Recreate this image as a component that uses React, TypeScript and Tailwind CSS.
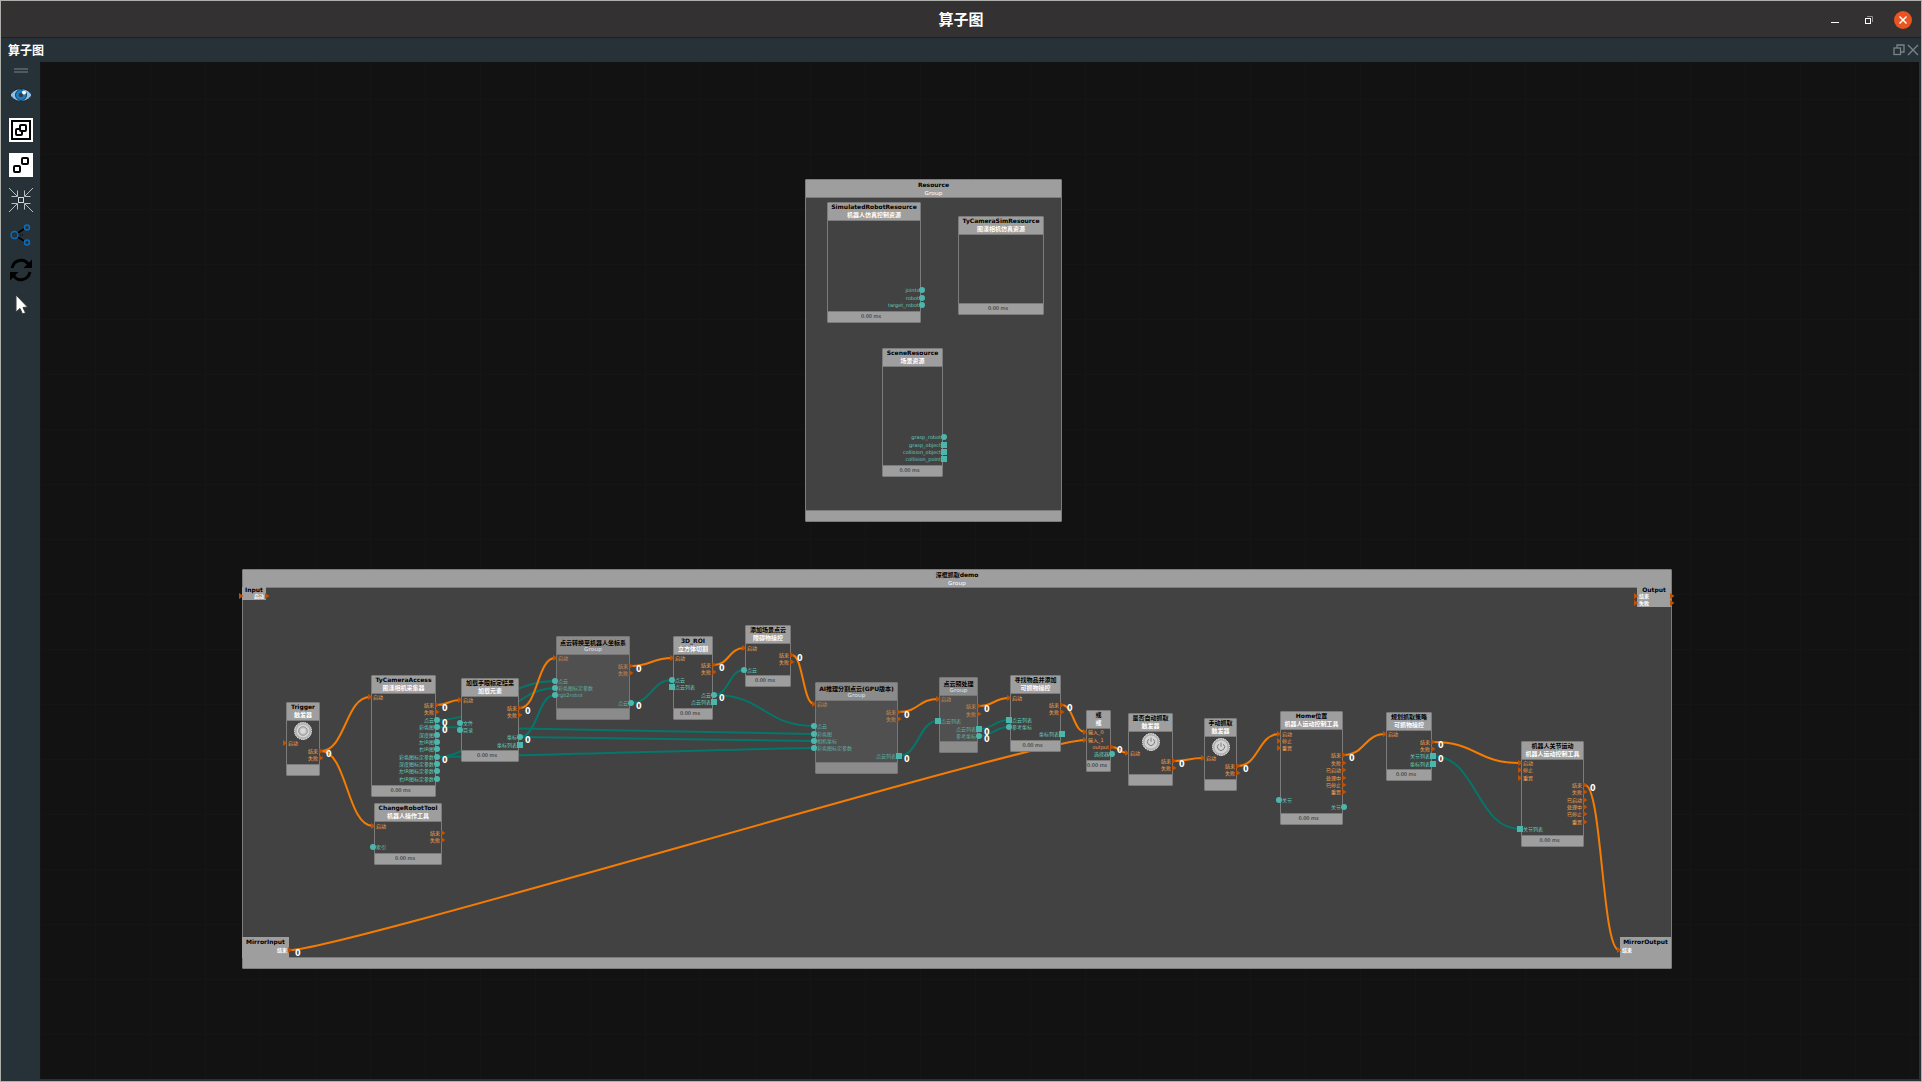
import type { ReactNode } from "react";
import clsx from "clsx";

type PortKind = "flow" | "value" | "list";
type NodeKind = "node" | "group" | "io" | "mirror";

interface PortData {
  kind: PortKind;
  y: number;
  label: string;
}

interface NodeData {
  id: string;
  title: string;
  subtitle?: string;
  kind?: NodeKind;
  x: number;
  y: number;
  w: number;
  h: number;
  time?: boolean;
  icon?: "ring" | "power";
  inputs?: PortData[];
  outputs?: PortData[];
}

interface EdgeData {
  from: [string, number];
  to: [string, number];
}

const flow = (y: number, label: string): PortData => ({ kind: "flow", y, label });
const value = (y: number, label: string): PortData => ({ kind: "value", y, label });
const list = (y: number, label: string): PortData => ({ kind: "list", y, label });

// scene position of the view's top left corner
const VIEW = { x: 40, y: 62 };

const groups: NodeData[] = [
  { id: "resource", title: "Resource", subtitle: "Group", x: 805, y: 179, w: 257, h: 343 },
  { id: "demo", title: "深框抓取demo", subtitle: "Group", x: 242, y: 569, w: 1430, h: 400 },
];

const nodes: NodeData[] = [
  {
    id: "simRobot", title: "SimulatedRobotResource", subtitle: "机器人仿真控制资源",
    x: 827, y: 202, w: 94, h: 121, time: true,
    outputs: [value(290, "joints"), value(298, "robot"), value(305, "target_robot")],
  },
  {
    id: "simCamera", title: "TyCameraSimResource", subtitle: "图漾相机仿真资源",
    x: 958, y: 216, w: 86, h: 99, time: true,
  },
  {
    id: "scene", title: "SceneResource", subtitle: "场景资源",
    x: 882, y: 348, w: 61, h: 129, time: true,
    outputs: [
      value(437, "grasp_robot"), list(445, "grasp_object"),
      list(452, "collision_object"), list(459, "collision_point"),
    ],
  },
  {
    id: "input", title: "Input", kind: "io", x: 242, y: 587, w: 24, h: 13,
    inputs: [flow(596, "")], outputs: [flow(596, "启动")],
  },
  {
    id: "output", title: "Output", kind: "io", x: 1637, y: 587, w: 34, h: 20,
    inputs: [flow(596, "结束"), flow(603, "失败")], outputs: [flow(596, ""), flow(603, "")],
  },
  {
    id: "mirrorInput", title: "MirrorInput", kind: "mirror", x: 242, y: 937, w: 47, h: 21,
    outputs: [flow(950, "结束")],
  },
  {
    id: "mirrorOutput", title: "MirrorOutput", kind: "mirror", x: 1620, y: 937, w: 51, h: 21,
    inputs: [flow(950, "结束")],
  },
  {
    id: "trigger", title: "Trigger", subtitle: "触发器", icon: "ring",
    x: 286, y: 702, w: 34, h: 74,
    inputs: [flow(743, "启动")], outputs: [flow(751, "结束"), flow(758, "失败")],
  },
  {
    id: "camera", title: "TyCameraAccess", subtitle: "图漾相机采集器",
    x: 371, y: 675, w: 65, h: 122, time: true,
    inputs: [flow(697, "启动")],
    outputs: [
      flow(705, "结束"), flow(712, "失败"), value(720, "点云"), value(727, "彩色图"),
      value(735, "深度图"), value(742, "左IR图"), value(749, "右IR图"),
      value(757, "彩色图标定参数"), value(764, "深度图标定参数"),
      value(771, "左IR图标定参数"), value(779, "右IR图标定参数"),
    ],
  },
  {
    id: "robotTool", title: "ChangeRobotTool", subtitle: "机器人操作工具",
    x: 374, y: 803, w: 68, h: 62, time: true,
    inputs: [flow(826, "启动"), value(847, "索引")],
    outputs: [flow(833, "结束"), flow(840, "失败")],
  },
  {
    id: "calib", title: "加载手眼标定结果", subtitle: "加载元素",
    x: 461, y: 678, w: 58, h: 84, time: true,
    inputs: [flow(700, "启动"), value(723, "文件"), value(730, "目录")],
    outputs: [flow(708, "结束"), flow(715, "失败"), value(737, "坐标"), list(745, "坐标列表")],
  },
  {
    id: "convert", title: "点云转换至机器人坐标系", subtitle: "Group", kind: "group",
    x: 556, y: 636, w: 74, h: 84,
    inputs: [flow(658, "启动"), value(681, "点云"), value(688, "彩色图标定参数"), value(695, "rgb2robot")],
    outputs: [flow(666, "结束"), flow(673, "失败"), value(703, "点云")],
  },
  {
    id: "roi", title: "3D_ROI", subtitle: "立方体切割",
    x: 673, y: 636, w: 40, h: 84, time: true,
    inputs: [flow(658, "启动"), value(680, "点云"), list(687, "点云列表")],
    outputs: [flow(665, "结束"), flow(672, "失败"), value(695, "点云"), list(702, "点云列表")],
  },
  {
    id: "addCloud", title: "添加场景点云", subtitle: "障碍物操控",
    x: 745, y: 625, w: 46, h: 62, time: true,
    inputs: [flow(648, "启动"), value(670, "点云")],
    outputs: [flow(655, "结束"), flow(662, "失败")],
  },
  {
    id: "ai", title: "AI推理分割点云(GPU版本)", subtitle: "Group", kind: "group",
    x: 815, y: 682, w: 83, h: 92,
    inputs: [
      flow(704, "启动"), value(726, "点云"), value(734, "彩色图"),
      value(741, "相机坐标"), value(748, "彩色图标定参数"),
    ],
    outputs: [flow(712, "结束"), flow(719, "失败"), list(756, "点云列表")],
  },
  {
    id: "pre", title: "点云预处理", subtitle: "Group", kind: "group",
    x: 939, y: 677, w: 39, h: 76,
    inputs: [flow(699, "启动"), list(721, "点云列表")],
    outputs: [flow(706, "结束"), flow(714, "失败"), list(729, "点云列表"), value(736, "参考坐标")],
  },
  {
    id: "find", title: "寻找物品并添加", subtitle: "可抓物操控",
    x: 1010, y: 675, w: 51, h: 77, time: true,
    inputs: [flow(698, "启动"), list(720, "点云列表"), value(727, "参考坐标")],
    outputs: [flow(705, "结束"), flow(712, "失败"), list(734, "坐标列表")],
  },
  {
    id: "or", title: "或", subtitle: "或",
    x: 1086, y: 710, w: 25, h: 62, time: true,
    inputs: [flow(732, "输入_0"), flow(740, "输入_1")],
    outputs: [flow(747, "output"), value(754, "选择器")],
  },
  {
    id: "auto", title: "是否自动抓取", subtitle: "触发器", icon: "power",
    x: 1128, y: 713, w: 45, h: 73,
    inputs: [flow(753, "启动")], outputs: [flow(761, "结束"), flow(768, "失败")],
  },
  {
    id: "manual", title: "手动抓取", subtitle: "触发器", icon: "power",
    x: 1204, y: 718, w: 33, h: 73,
    inputs: [flow(758, "启动")], outputs: [flow(766, "结束"), flow(773, "失败")],
  },
  {
    id: "home", title: "Home位置", subtitle: "机器人运动控制工具",
    x: 1280, y: 711, w: 63, h: 114, time: true,
    inputs: [flow(734, "启动"), flow(741, "停止"), flow(748, "重置"), value(800, "关节")],
    outputs: [
      flow(755, "结束"), flow(763, "失败"), flow(770, "已启动"), flow(778, "处理中"),
      flow(785, "已停止"), flow(792, "重置"), value(807, "关节"),
    ],
  },
  {
    id: "plan", title: "规划抓取策略", subtitle: "可抓物操控",
    x: 1386, y: 712, w: 46, h: 69, time: true,
    inputs: [flow(734, "启动")],
    outputs: [flow(742, "结束"), flow(749, "失败"), list(756, "关节列表"), list(764, "坐标列表")],
  },
  {
    id: "joint", title: "机器人关节运动", subtitle: "机器人运动控制工具",
    x: 1521, y: 741, w: 63, h: 106, time: true,
    inputs: [flow(763, "启动"), flow(770, "停止"), flow(778, "重置"), list(829, "关节列表")],
    outputs: [
      flow(785, "结束"), flow(792, "失败"), flow(800, "已启动"), flow(807, "处理中"),
      flow(814, "已停止"), flow(822, "重置"),
    ],
  },
];

// [node id, port index] on both ends
const edges: EdgeData[] = [
  { from: ["camera", 2], to: ["convert", 1] },
  { from: ["camera", 3], to: ["ai", 2] },
  { from: ["camera", 7], to: ["convert", 2] },
  { from: ["camera", 7], to: ["ai", 4] },
  { from: ["calib", 2], to: ["convert", 3] },
  { from: ["calib", 2], to: ["ai", 3] },
  { from: ["convert", 2], to: ["roi", 1] },
  { from: ["roi", 2], to: ["addCloud", 1] },
  { from: ["roi", 2], to: ["ai", 1] },
  { from: ["ai", 2], to: ["pre", 1] },
  { from: ["pre", 2], to: ["find", 1] },
  { from: ["pre", 3], to: ["find", 2] },
  { from: ["plan", 2], to: ["joint", 3] },
  { from: ["trigger", 0], to: ["camera", 0] },
  { from: ["trigger", 0], to: ["robotTool", 0] },
  { from: ["camera", 0], to: ["calib", 0] },
  { from: ["calib", 0], to: ["convert", 0] },
  { from: ["convert", 0], to: ["roi", 0] },
  { from: ["roi", 0], to: ["addCloud", 0] },
  { from: ["addCloud", 0], to: ["ai", 0] },
  { from: ["ai", 0], to: ["pre", 0] },
  { from: ["pre", 0], to: ["find", 0] },
  { from: ["find", 0], to: ["or", 0] },
  { from: ["mirrorInput", 0], to: ["or", 1] },
  { from: ["or", 0], to: ["auto", 0] },
  { from: ["auto", 0], to: ["manual", 0] },
  { from: ["manual", 0], to: ["home", 0] },
  { from: ["home", 0], to: ["plan", 0] },
  { from: ["plan", 0], to: ["joint", 0] },
  { from: ["joint", 0], to: ["mirrorOutput", 0] },
];

const byId = new Map(nodes.map((node) => [node.id, node]));

const outputPoint = ([id, index]: [string, number]) => {
  const node = byId.get(id)!;
  const port = node.outputs![index];
  return { x: node.x + node.w + 1, y: port.y, kind: port.kind };
};

const inputPoint = ([id, index]: [string, number]) => {
  const node = byId.get(id)!;
  return { x: node.x - 1, y: node.inputs![index].y };
};

const edgePath = (edge: EdgeData) => {
  const a = outputPoint(edge.from);
  const b = inputPoint(edge.to);
  const bend = Math.min((b.x - a.x) / 2, 50);
  return `M${a.x} ${a.y} C${a.x + bend} ${a.y} ${b.x - bend} ${b.y} ${b.x} ${b.y}`;
};

const connected = [...new Set(edges.map((edge) => edge.from.join(":")))].map((key) => {
  const [id, index] = key.split(":");
  return { key, ...outputPoint([id, Number(index)]) };
});

const Marker = ({ kind }: { kind: PortKind }) => {
  if (kind === "flow") {
    return (
      <svg viewBox="0 0 6 6" className="size-[6px] shrink-0 fill-[#bf5202]">
        <path d="M1 0 L5.5 3 L1 6 Z" />
      </svg>
    );
  }
  return (
    <span className={clsx("size-[6px] shrink-0 bg-[#4db6ac]", kind === "value" && "rounded-full")} />
  );
};

const Port = ({ port, node, side }: { port: PortData; node: NodeData; side: "left" | "right" }) => {
  const solid = node.kind === "io" || node.kind === "mirror";
  return (
    <div
      className={clsx(
        "absolute flex h-[6px] items-center whitespace-nowrap text-[5px] leading-[6px]",
        side === "left" ? "-left-[5px]" : "-right-[5px] flex-row-reverse",
        solid ? "font-bold text-white" : port.kind === "flow" ? "text-[#f2a04e]" : "text-[#66cbbd]",
      )}
      style={{ top: port.y - node.y - 4 }}
    >
      <Marker kind={port.kind} />
      <span className={clsx(node.kind === "group" && "opacity-75")}>{port.label}</span>
    </div>
  );
};

const TriggerIcon = ({ icon }: { icon: "ring" | "power" }) => (
  <svg viewBox="0 0 20 20" className="mx-auto size-5 fill-none">
    <circle cx="10" cy="10" r="8.5" fill="#b9b9b9" stroke="#f4f4f4" strokeDasharray="1.5 0.8" />
    <circle cx="10" cy="10" r="7" fill="#d4d4d4" stroke="#9a9a9a" strokeWidth="0.6" />
    {icon === "ring" ? (
      <>
        <circle cx="10" cy="10" r="4.3" fill="#c6c6c6" stroke="#8c8c8c" strokeWidth="0.9" />
        <circle cx="10" cy="10" r="2.4" fill="#dcdcdc" />
      </>
    ) : (
      <path d="M7.6 7.2 A3.6 3.6 0 1 0 12.4 7.2 M10 5.6 V9.8" stroke="#7c7c7c" strokeWidth="1" />
    )}
  </svg>
);

const GraphNode = ({ node }: { node: NodeData }) => {
  const box = { left: node.x, top: node.y, width: node.w, height: node.h };
  const ports = (
    <>
      {node.inputs?.map((port) => (
        <Port key={port.y} port={port} node={node} side="left" />
      ))}
      {node.outputs?.map((port) => (
        <Port key={port.y} port={port} node={node} side="right" />
      ))}
    </>
  );

  if (node.kind === "io" || node.kind === "mirror") {
    return (
      <div
        className="absolute border border-[#9e9e9e] bg-[#9e9e9e] text-center whitespace-nowrap"
        style={box}
      >
        <div
          className={clsx(
            "text-[6px] font-bold text-black",
            node.kind === "io" ? "leading-[3px]" : "leading-[7px]",
          )}
        >
          {node.title}
        </div>
        {ports}
      </div>
    );
  }

  const group = node.kind === "group";
  return (
    <div
      className={clsx(
        "absolute flex flex-col rounded-[1px] border whitespace-nowrap",
        group ? "border-[#777] bg-[#505050]" : "border-[#7c7c7c] bg-[#424242]",
      )}
      style={box}
    >
      <div
        className={clsx(
          "flex h-[18px] shrink-0 flex-col items-center border-b text-[6px]",
          group ? "border-[#777] bg-[#8b8b8b] pt-0.5 leading-[7px]" : "border-[#7c7c7c] bg-[#9e9e9e] leading-[8px]",
        )}
      >
        <span className="font-bold text-black">{node.title}</span>
        <span className={clsx(group ? "font-['Noto_Sans'] text-[#e4e4e4]" : "font-bold text-white")}>
          {node.subtitle}
        </span>
      </div>
      <div className="flex-1">{node.icon && <TriggerIcon icon={node.icon} />}</div>
      <div
        className={clsx(
          "h-[11px] shrink-0 border-t pr-1.5 text-center text-[5px] leading-[8px] text-[#1c1c1c]",
          group ? "border-[#777] bg-[#8b8b8b]" : "border-[#7c7c7c] bg-[#9e9e9e]",
        )}
      >
        {node.time && "0.00 ms"}
      </div>
      {ports}
    </div>
  );
};

const GroupFrame = ({ group }: { group: NodeData }) => (
  <div
    className="absolute flex flex-col rounded-[1px] border border-[#7c7c7c] bg-[#424242]"
    style={{ left: group.x, top: group.y, width: group.w, height: group.h }}
  >
    <div className="flex h-[18px] flex-col items-center border-b border-[#7c7c7c] bg-[#9e9e9e] pt-px text-[6px] leading-[8px]">
      <span className="font-bold text-black">{group.title}</span>
      <span className="font-['Noto_Sans'] text-white">{group.subtitle}</span>
    </div>
    <div className="flex-1" />
    <div className="h-[11px] border-t border-[#7c7c7c] bg-[#9e9e9e]" />
  </div>
);

const Graph = () => (
  <div className="absolute inset-0" style={{ transform: `translate(${-VIEW.x}px, ${-VIEW.y}px)` }}>
    {groups.map((group) => (
      <GroupFrame key={group.id} group={group} />
    ))}
    <svg className="absolute inset-0 size-full overflow-visible fill-none">
      {edges.map((edge) => (
        <path
          key={`${edge.from}-${edge.to}`}
          d={edgePath(edge)}
          strokeWidth="2"
          className={outputPoint(edge.from).kind === "flow" ? "stroke-[#f57c00]" : "stroke-[#04776a]"}
        />
      ))}
    </svg>
    {nodes.map((node) => (
      <GraphNode key={node.id} node={node} />
    ))}
    {connected.map((point) => (
      <span
        key={point.key}
        className="absolute text-[8px] leading-[8px] font-bold text-white"
        style={{ left: point.x + 5, top: point.y }}
      >
        0
      </span>
    ))}
  </div>
);

const ToolButton = ({ label, children }: { label: string; children: ReactNode }) => (
  <button type="button" aria-label={label} className="size-6">
    <svg viewBox="0 0 24 24" className="size-6 fill-none">
      {children}
    </svg>
  </button>
);

const Toolbar = () => (
  <div className="flex w-[39px] shrink-0 flex-col items-center gap-[11px] bg-[#263238]">
    <div className="mt-1.5 mb-[-1px] h-[5px] w-3.5 border-y-2 border-[#505a5f]" />
    <ToolButton label="显示">
      <path d="M1 12 C6 3.500 18 3.500 23 12 C18 20.500 6 20.500 1 12 Z" fill="#8cbfe8" stroke="#1b2226" />
      <circle cx="12" cy="12" r="5.500" fill="#1c7cc4" stroke="#15415f" />
      <circle cx="12" cy="12" r="2.300" fill="#3c3c3c" />
      <circle cx="15" cy="9.500" r="2" fill="#fff" />
    </ToolButton>
    <ToolButton label="组合">
      <path d="M0 0 H24 V24 H0 Z" fill="#fff" />
      <rect x="3" y="3" width="18" height="18" stroke="#000" strokeWidth="2" />
      <rect x="7" y="11" width="6" height="6" rx="1" stroke="#000" strokeWidth="2" />
      <rect x="11" y="7" width="6" height="6" rx="1" fill="#fff" stroke="#000" strokeWidth="2" />
    </ToolButton>
    <ToolButton label="取消组合">
      <path d="M0 0 H24 V24 H0 Z" fill="#fff" />
      <rect x="5" y="13" width="6" height="6" rx="1" stroke="#000" strokeWidth="2" />
      <rect x="13" y="5" width="6" height="6" rx="1" stroke="#000" strokeWidth="2" />
    </ToolButton>
    <ToolButton label="居中">
      <path
        d="M0 0 L8 8 M24 0 L16 8 M0 24 L8 16 M24 24 L16 16 M8.500 2.500 V8.500 H2.500 M15.500 2.500 V8.500 H21.500 M8.500 21.500 V15.500 H2.500 M15.500 21.500 V15.500 H21.500"
        stroke="#b9bfc1"
      />
      <rect x="9.500" y="9.500" width="5" height="5" stroke="#d5d9da" />
    </ToolButton>
    <ToolButton label="布局">
      <path d="M8 10.500 L15 6 M8 13.500 L15 18" stroke="#000" strokeWidth="1.500" />
      <path d="M9 12 H14" stroke="#000" strokeDasharray="1 1" />
      <circle cx="5.500" cy="12" r="3.500" stroke="#0a6ebd" strokeWidth="1.500" />
      <circle cx="18" cy="4.500" r="2.500" stroke="#0a6ebd" strokeWidth="1.500" />
      <circle cx="18" cy="19.500" r="2.500" stroke="#0a6ebd" strokeWidth="1.500" />
    </ToolButton>
    <ToolButton label="刷新">
      <path d="M3 10 C5 1.500 15 -0.500 19.500 6.500 M21 14 C19 22.500 9 24.500 4.500 17.500" stroke="#000" strokeWidth="3" />
      <path d="M23 1.500 V10 H14.500 Z M1 22.500 V14 H9.500 Z" fill="#000" />
    </ToolButton>
    <ToolButton label="选择">
      <path
        d="M7 2 V19 L11 15.500 L13.500 21 L16.500 19.800 L14 14.500 L18.500 14 Z"
        fill="#fff"
        stroke="#3a3a3a"
      />
    </ToolButton>
  </div>
);

const TitleBar = () => (
  <header className="grid h-[37px] shrink-0 grid-cols-[1fr_auto_1fr] items-center border-b border-[#1f1f1f] bg-[#333131] pt-0.5">
    <span />
    <h1 className="text-[15px] leading-5 font-bold text-white">算子图</h1>
    <div className="flex items-center justify-end gap-4 pr-[9px]">
      <button type="button" aria-label="最小化" className="size-[18px]">
        <svg viewBox="0 0 18 18" className="fill-none stroke-white">
          <path d="M5 11.500 H13" />
        </svg>
      </button>
      <button type="button" aria-label="还原" className="size-[18px]">
        <svg viewBox="0 0 18 18" className="fill-none stroke-white">
          <rect x="5.500" y="7.500" width="5" height="5" />
          <path d="M7 5.500 H12.500 V11" stroke="#8f8d8d" />
        </svg>
      </button>
      <button type="button" aria-label="关闭" className="size-[18px] rounded-full bg-[#e95420]">
        <svg viewBox="0 0 18 18" className="fill-none stroke-white">
          <path d="M5.500 5.500 L12.500 12.500 M12.500 5.500 L5.500 12.500" strokeWidth="1.500" />
        </svg>
      </button>
    </div>
  </header>
);

const DockTitle = () => (
  <div className="flex h-6 shrink-0 items-center bg-[#263238] pl-[7px]">
    <h2 className="flex-1 pt-0.5 text-[12px] leading-4 font-bold text-white">算子图</h2>
    <div className="flex gap-0.5 pr-0.5">
      <button type="button" aria-label="浮动" className="size-3">
        <svg viewBox="0 0 12 12" className="fill-none stroke-[#7b8285]">
          <rect x="1" y="4" width="6.500" height="6.500" strokeWidth="1.300" />
          <path d="M4 4 V1 H11 V8 H7.500" strokeWidth="1.300" />
        </svg>
      </button>
      <button type="button" aria-label="关闭面板" className="size-3">
        <svg viewBox="0 0 12 12" className="fill-none stroke-[#7b8285]">
          <path d="M1 1 L11 11 M11 1 L1 11" strokeWidth="1.400" />
        </svg>
      </button>
    </div>
  </div>
);

export default function App() {
  return (
    <div className="flex h-screen flex-col overflow-hidden border border-[#adafab] bg-[#263238] font-['DejaVu_Sans','Noto_Sans_CJK_SC',sans-serif]">
      <TitleBar />
      <DockTitle />
      <div className="flex min-h-0 flex-1 pr-0.5 pb-0.5">
        <Toolbar />
        <main className="relative flex-1 overflow-hidden bg-[#121212] bg-[linear-gradient(#151515_1px,transparent_1px),linear-gradient(90deg,#151515_1px,transparent_1px)] bg-[size:55px_55px] bg-[position:0_37px,0_0]">
          <Graph />
        </main>
      </div>
    </div>
  );
}
